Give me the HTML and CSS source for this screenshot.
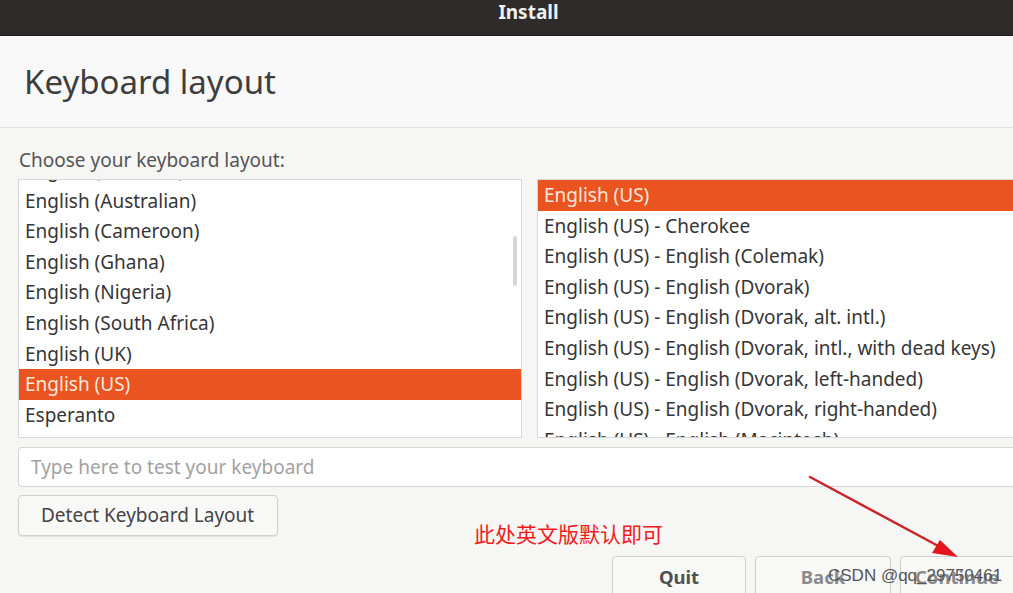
FILE: index.html
```html
<!DOCTYPE html>
<html>
<head>
<meta charset="utf-8">
<link rel="stylesheet" href="styles.css">
</head>
<body>
<div class="window">
  <div class="titlebar">Install</div>
  <div class="header"><h1 class="title">Keyboard layout</h1></div>
  <div class="content">
    <div class="label">Choose your keyboard layout:</div>
    <div class="lists">
      <div class="list left">
        <div class="rows shift-left">
          <div class="row">English (Australia)</div>
          <div class="row">English (Australian)</div>
          <div class="row">English (Cameroon)</div>
          <div class="row">English (Ghana)</div>
          <div class="row">English (Nigeria)</div>
          <div class="row">English (South Africa)</div>
          <div class="row">English (UK)</div>
          <div class="row selected">English (US)</div>
          <div class="row">Esperanto</div>
        </div>
        <div class="scrollbar"></div>
      </div>
      <div class="list right">
        <div class="rows">
          <div class="row selected">English (US)</div>
          <div class="row">English (US) - Cherokee</div>
          <div class="row">English (US) - English (Colemak)</div>
          <div class="row">English (US) - English (Dvorak)</div>
          <div class="row">English (US) - English (Dvorak, alt. intl.)</div>
          <div class="row">English (US) - English (Dvorak, intl., with dead keys)</div>
          <div class="row">English (US) - English (Dvorak, left-handed)</div>
          <div class="row">English (US) - English (Dvorak, right-handed)</div>
          <div class="row">English (US) - English (Macintosh)</div>
        </div>
      </div>
    </div>
    <div class="entry">Type here to test your keyboard</div>
    <div class="detect-row">
      <div class="btn detect">Detect Keyboard Layout</div>
    </div>
    <div class="note">此处英文版默认即可</div>
    <div class="nav">
      <div class="btn nav-btn quit">Quit</div>
      <div class="btn nav-btn back">Back</div>
      <div class="btn nav-btn cont">Continue</div>
    </div>
  </div>
  <svg class="arrow" width="1013" height="593" viewBox="0 0 1013 593">
    <defs>
      <filter id="blur" x="-10%" y="-10%" width="120%" height="120%"><feGaussianBlur stdDeviation="0.6"/></filter>
    </defs>
    <g filter="url(#blur)">
      <line x1="810" y1="477" x2="942" y2="548" stroke="#c8282a" stroke-width="2.5" stroke-linecap="round"/>
      <polygon points="958,557 932,553 940,540" fill="#e0161b"/>
    </g>
  </svg>
  <div class="watermark">CSDN @qq_29750461</div>
</div>
</body>
</html>
```
FILE: styles.css
```css
* { box-sizing: border-box; }
html, body { margin: 0; padding: 0; }
body {
  width: 1013px;
  height: 593px;
  overflow: hidden;
  background: #f6f6f5;
  font-family: "Noto Sans", "Open Sans", sans-serif;
  color: #3c3c3c;
}
.window { position: relative; width: 1013px; height: 593px; }
.titlebar {
  height: 36px;
  background: #2f2b2b;
  color: #f0f0f0;
  font-weight: bold;
  font-size: 19px;
  text-align: center;
  line-height: 24px;
  border-bottom: 1px solid #1e1c1c;
  padding-left: 44px;
}
.header {
  height: 92px;
  background: #f8f8f8;
  border-bottom: 1px solid #e4e4e2;
  padding: 24px 0 0 24px;
}
.title {
  margin: 0;
  font-weight: normal;
  font-size: 33px;
  line-height: 44px;
  color: #3e3e3e;
}
.content { padding: 19px 0 0 18px; }
.label {
  font-size: 19px;
  color: #555;
  line-height: 26px;
  padding-left: 1px;
}
.lists {
  display: flex;
  gap: 15px;
  margin-top: 6px;
}
.list {
  position: relative;
  background: #fff;
  border: 1px solid #d8d8d6;
  height: 259px;
  overflow: hidden;
}
.list.left { width: 504px; }
.list.right { flex: 1; border-right: none; }
.rows { display: flex; flex-direction: column; }
.shift-left { margin-top: -25px; }
.row {
  height: 30.6px;
  line-height: 30px;
  padding-left: 6px;
  font-size: 19px;
  color: #363636;
  white-space: nowrap;
}
.row.selected {
  background: #e95420;
  color: #fbe8df;
}
.scrollbar {
  position: absolute;
  right: 4px;
  top: 56px;
  width: 4px;
  height: 50px;
  background: #d6d6d6;
  border-radius: 2px;
}
.entry {
  margin-top: 9px;
  height: 40px;
  background: #fff;
  border: 1px solid #d6d6d4;
  border-right: none;
  border-radius: 4px 0 0 4px;
  padding-left: 12px;
  line-height: 38px;
  font-size: 19px;
  color: #a2a2a2;
}
.detect-row { margin-top: 8px; display: flex; }
.btn {
  background: #f8f8f7;
  border: 1px solid #cfcfcd;
  border-radius: 4px;
  box-shadow: 0 1px 1px rgba(0,0,0,0.08);
  color: #444;
  font-size: 19px;
}
.detect {
  width: 260px;
  height: 41px;
  line-height: 38px;
  padding-left: 22px;
}
.note {
  margin: -17px 0 0 456px;
  font-family: "Noto Sans CJK SC", sans-serif;
  font-size: 21px;
  color: #f21b1b;
  line-height: 28px;
}
.nav {
  display: flex;
  gap: 9px;
  margin: 9px 0 0 594px;
}
.nav-btn {
  height: 46px;
  text-align: center;
  line-height: 40px;
  font-weight: bold;
  font-size: 18.5px;
  color: #505050;
}
.quit { width: 134px; }
.back { width: 136px; color: #8a8a8a; }
.cont { flex: 1; border-right: none; border-radius: 4px 0 0 4px; color: #8a8a8a; }
.arrow { position: absolute; left: 0; top: 0; pointer-events: none; }
.watermark {
  position: absolute;
  left: 828px;
  top: 566px;
  font-family: "Liberation Sans", sans-serif;
  font-size: 17px;
  color: #555;
}
```
